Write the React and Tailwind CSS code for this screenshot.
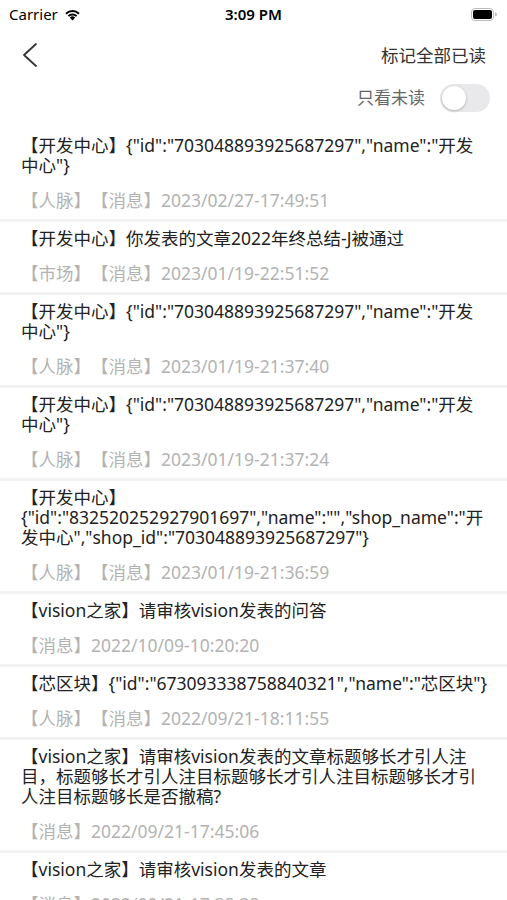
import { useState } from "react";

const messages = [
  {
    title: '【开发中心】{"id":"703048893925687297","name":"开发中心"}',
    meta: "【人脉】【消息】2023/02/27-17:49:51",
  },
  {
    title: "【开发中心】你发表的文章2022年终总结-J被通过",
    meta: "【市场】【消息】2023/01/19-22:51:52",
  },
  {
    title: '【开发中心】{"id":"703048893925687297","name":"开发中心"}',
    meta: "【人脉】【消息】2023/01/19-21:37:40",
  },
  {
    title: '【开发中心】{"id":"703048893925687297","name":"开发中心"}',
    meta: "【人脉】【消息】2023/01/19-21:37:24",
  },
  {
    title:
      '【开发中心】{"id":"832520252927901697","name":"","shop_name":"开发中心","shop_id":"703048893925687297"}',
    meta: "【人脉】【消息】2023/01/19-21:36:59",
  },
  {
    title: "【vision之家】请审核vision发表的问答",
    meta: "【消息】2022/10/09-10:20:20",
  },
  {
    title: '【芯区块】{"id":"673093338758840321","name":"芯区块"}',
    meta: "【人脉】【消息】2022/09/21-18:11:55",
  },
  {
    title:
      "【vision之家】请审核vision发表的文章标题够长才引人注目，标题够长才引人注目标题够长才引人注目标题够长才引人注目标题够长是否撤稿?",
    meta: "【消息】2022/09/21-17:45:06",
  },
  {
    title: "【vision之家】请审核vision发表的文章",
    meta: "【消息】2022/09/21-17:38:38",
  },
];

const StatusBar = () => (
  <div className="h-[28px] flex items-center justify-between px-[9px] text-black">
    <div className="flex items-center gap-[6px] w-[120px]">
      <span className="text-[15px] leading-none">Carrier</span>
      <svg width="17" height="13" viewBox="0 0 17 13">
        <path d="M8.5 12.5 L5.8 9.6 A3.9 3.9 0 0 1 11.2 9.6 Z" fill="#000" />
        <path
          d="M3.7 7.4 A6.9 6.9 0 0 1 13.3 7.4 L11.9 8.8 A4.9 4.9 0 0 0 5.1 8.8 Z"
          fill="#000"
        />
        <path
          d="M1.3 5 A10.3 10.3 0 0 1 15.7 5 L14.3 6.4 A8.3 8.3 0 0 0 2.7 6.4 Z"
          fill="#000"
        />
      </svg>
    </div>
    <span className="text-[15px] font-semibold leading-none">3:09 PM</span>
    <div className="w-[120px] flex justify-end pr-[1px]">
      <svg width="26" height="13" viewBox="0 0 26 13">
        <rect x="0.5" y="0.5" width="22" height="12" rx="3.5" fill="none" stroke="#bbb" />
        <rect x="2" y="2" width="19" height="9" rx="2" fill="#000" />
        <path d="M24 4.5 A2 2 0 0 1 24 8.5 Z" fill="#bbb" />
      </svg>
    </div>
  </div>
);

const App = () => {
  const [unreadOnly, setUnreadOnly] = useState(false);

  return (
    <div
      className="w-[507px] h-[900px] overflow-hidden bg-white [text-spacing-trim:space-all]"
      style={{ fontFamily: '"Noto Sans", "Noto Sans CJK SC", sans-serif' }}
    >
      <StatusBar />

      {/* nav */}
      <div className="h-[54px] flex items-center justify-between pl-[22px] pr-[21px]">
        <svg width="16" height="26" viewBox="0 0 16 26">
          <polyline
            points="14,2 2,13 14,24"
            fill="none"
            stroke="#333"
            strokeWidth="1.8"
            strokeLinecap="round"
            strokeLinejoin="round"
          />
        </svg>
        <span className="text-[17.5px] text-[#333]">标记全部已读</span>
      </div>

      {/* filter */}
      <div className="h-[32px] mb-[15px] flex items-center justify-end gap-[15px] pr-[17px]">
        <span className="text-[17px] text-[#666]">只看未读</span>
        <button
          onClick={() => setUnreadOnly(!unreadOnly)}
          className={`w-[50px] h-[28px] rounded-full p-[2px] flex ${
            unreadOnly ? "bg-[#34c759] justify-end" : "bg-[#e9e9eb] justify-start"
          }`}
        >
          <span className="w-[24px] h-[24px] rounded-full bg-white shadow-[0_1px_3px_rgba(0,0,0,0.25)]" />
        </button>
      </div>

      <div>
        {messages.map((m, i) => (
          <div
            key={i}
            className="pl-[21px] pr-[18px] pt-[6px] pb-[9px] border-b-[3px] border-[#f2f2f2]"
          >
            <p className="text-[17.5px] leading-[20px] text-[#222] break-words">
              {m.title}
            </p>
            <p className="mt-[15px] text-[17.5px] leading-[20px] text-[#b3b3b3]">
              {m.meta}
            </p>
          </div>
        ))}
      </div>
    </div>
  );
};

export default App;
